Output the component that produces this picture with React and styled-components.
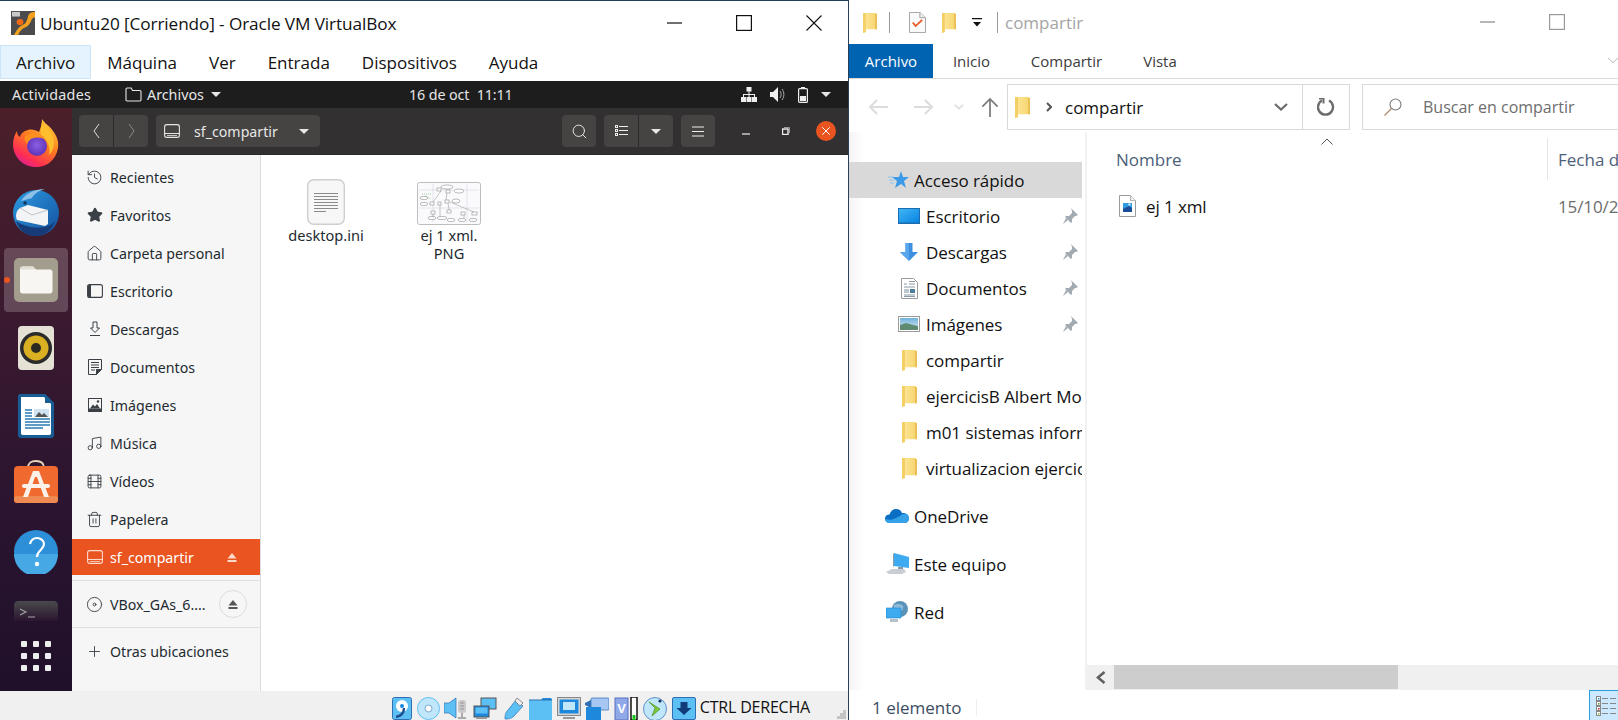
import React from "react";
import styled, { createGlobalStyle } from "styled-components";
import { Disc, Film, History, House, Music, Plus, Search, Star, Trash2 } from "lucide-react";

const GlobalStyle = createGlobalStyle`
  html, body {
    margin: 0;
    padding: 0;
    background: #fff;
    overflow: hidden;
  }
  * { box-sizing: border-box; }
  svg { display: block; flex-shrink: 0; }
`;

const WIN_FONT = `"Open Sans", "Noto Sans", sans-serif`;
const UBU_FONT = `"Noto Sans", "Open Sans", sans-serif`;

const Page = styled.div`
  display: flex;
  width: 1618px;
  height: 720px;
  overflow: hidden;
  font-family: ${WIN_FONT};
`;

/* ---------- VirtualBox window ---------- */

const VBoxWindow = styled.div`
  display: flex;
  flex-direction: column;
  width: 849px;
  height: 720px;
  flex-shrink: 0;
  border-top: 1px solid #1b4057;
  border-right: 1px solid #2a3f55;
  background: #fff;
`;

const VBoxTitle = styled.div`
  display: flex;
  align-items: center;
  height: 44px;
  padding-left: 11px;
  flex-shrink: 0;
`;

const TitleText = styled.span`
  margin-left: 5px;
  font-size: 17.2px;
  letter-spacing: -0.1px;
  color: #111;
`;

const CaptionButtons = styled.div`
  display: flex;
  align-items: center;
  margin-left: auto;
  padding-right: 26px;
  gap: 54px;
`;

const MenuBar = styled.div`
  display: flex;
  height: 36px;
  flex-shrink: 0;
  padding-bottom: 2px;
`;

const MenuItem = styled.div`
  display: flex;
  align-items: center;
  padding: 0 16px;
  font-size: 17px;
  color: #111;
  background: ${(p) => (p.$active ? "#e5f3fe" : "transparent")};
  outline: ${(p) => (p.$active ? "1px solid #cce4f7" : "none")};
  outline-offset: -1px;
`;

const TopPanel = styled.div`
  display: flex;
  align-items: center;
  height: 27px;
  flex-shrink: 0;
  background: #1d1d1d;
  color: #e6e6e6;
  font-family: ${UBU_FONT};
  font-size: 14.3px;
`;

const PanelActivities = styled.span`
  width: 125px;
  padding-left: 12px;
  letter-spacing: 0.25px;
`;

const PanelApp = styled.div`
  display: flex;
  align-items: center;
  width: 284px;
  gap: 5px;
`;

const PanelClock = styled.span`
  width: 332px;
  letter-spacing: -0.1px;
`;

const PanelTray = styled.div`
  display: flex;
  align-items: center;
  gap: 13px;
`;

const Caret = styled.span`
  display: block;
  width: 0;
  height: 0;
  margin-left: ${(p) => p.$ml || 0}px;
  border-left: 5px solid transparent;
  border-right: 5px solid transparent;
  border-top: 5px solid #e6e6e6;
`;

const Desktop = styled.div`
  display: flex;
  flex: 1;
  min-height: 0;
  font-family: ${UBU_FONT};
`;

const Dock = styled.div`
  display: flex;
  flex-direction: column;
  width: 72px;
  flex-shrink: 0;
  background: linear-gradient(180deg, #4c1f2a 0%, #3b1a2f 35%, #2a1430 70%, #20102a 100%);
`;

const DockSlot = styled.div`
  position: relative;
  display: flex;
  justify-content: center;
  align-items: ${(p) => (p.$clip ? "flex-start" : "center")};
  height: ${(p) => p.$h || 68}px;
  padding-top: ${(p) => (p.$clip ? 15 : 0)}px;
  padding-bottom: ${(p) => p.$pb || 0}px;
  overflow: hidden;
  flex-shrink: 0;
`;

const DockActive = styled.div`
  display: flex;
  align-items: center;
  justify-content: center;
  width: 64px;
  height: 64px;
  border-radius: 4px;
  background: rgba(255, 255, 255, 0.2);
`;

const RunningDot = styled.span`
  position: absolute;
  left: 4px;
  top: 31px;
  width: 6px;
  height: 6px;
  border-radius: 50%;
  background: #e95420;
`;

const DockGrid = styled.div`
  display: grid;
  grid-template-columns: repeat(3, 6px);
  gap: 6px;
  margin: auto auto 20px;
`;

const DockDot = styled.span`
  width: 6px;
  height: 6px;
  border-radius: 1px;
  background: #eee;
`;

const FilesWindow = styled.div`
  display: flex;
  flex-direction: column;
  flex: 1;
  min-width: 0;
`;

const HeaderBar = styled.div`
  display: flex;
  align-items: center;
  height: 47px;
  padding-left: 7px;
  flex-shrink: 0;
  background: #323030;
  border-bottom: 1px solid #2a2828;
`;

const HeaderGroup = styled.div`
  display: flex;
  height: 32px;
  margin-right: ${(p) => p.$mr ?? 8}px;
  border-radius: 4px;
  background: #454443;
  overflow: hidden;
`;

const HeaderBtn = styled.div`
  display: flex;
  align-items: center;
  justify-content: center;
  width: ${(p) => p.$w || 34}px;
  & + & {
    border-left: 1px solid #2c2b2b;
  }
`;

const PathBtn = styled.div`
  display: flex;
  align-items: center;
  width: 164px;
  padding-left: 8px;
  color: #e6e6e6;
  font-size: 14.2px;
`;

const PathLabel = styled.span`
  margin-left: 14px;
  width: 105px;
`;

const HeaderSpacer = styled.div`
  width: 234px;
`;

const WmButtons = styled.div`
  display: flex;
  align-items: center;
  margin-left: 27px;
  gap: 32px;
`;

const WmMinimize = styled.span`
  margin-top: 6px;
`;

const WmClose = styled.div`
  display: flex;
  align-items: center;
  justify-content: center;
  width: 20px;
  height: 20px;
  margin-left: -6px;
  border-radius: 50%;
  background: #e95420;
`;

const FilesBody = styled.div`
  display: flex;
  flex: 1;
  min-height: 0;
`;

const Places = styled.div`
  display: flex;
  flex-direction: column;
  width: 189px;
  flex-shrink: 0;
  padding-top: 10px;
  background: #f6f6f6;
  border-right: 1px solid #dcdcdc;
  color: #1e2a30;
  font-size: 14.2px;
`;

const PlacesList = styled.div`
  display: flex;
  flex-direction: column;
  gap: 14px;
`;

const PlaceRow = styled.div`
  display: flex;
  align-items: center;
  height: ${(p) => (p.$selected ? 36 : p.$h || 24)}px;
  margin-top: ${(p) => (p.$selected ? -6 : 0)}px;
  padding-left: 14px;
  gap: 7px;
  background: ${(p) => (p.$selected ? "#e95420" : "transparent")};
  color: ${(p) => (p.$selected ? "#fff" : "inherit")};
`;

const PlaceIcon = styled.span`
  display: flex;
  align-items: center;
  justify-content: center;
  width: 17px;
  flex-shrink: 0;
`;

const PlaceLabel = styled.span`
  flex: 1;
  white-space: nowrap;
`;

const PlaceRule = styled.div`
  height: 1px;
  margin-top: ${(p) => p.$mt || 0}px;
  background: #dfdfdf;
`;

const EjectCell = styled.span`
  margin-right: 23px;
`;

const EjectRound = styled.div`
  display: flex;
  align-items: center;
  justify-content: center;
  width: 28px;
  height: 28px;
  margin-right: 13px;
  border: 1px solid #dcdcdc;
  border-radius: 50%;
`;

const FileGrid = styled.div`
  display: flex;
  flex: 1;
  align-items: flex-start;
  padding: 23px 0 0 15px;
  gap: 23px;
  background: #fff;
`;

const FileItem = styled.div`
  display: flex;
  flex-direction: column;
  align-items: center;
  width: 100px;
  color: #1e2a30;
  font-size: 14.6px;
  line-height: 18px;
  text-align: center;
`;

const FileThumb = styled.div`
  display: flex;
  align-items: flex-end;
  height: 47px;
  margin-bottom: 1px;
`;

const VBoxStatus = styled.div`
  display: flex;
  align-items: center;
  justify-content: flex-end;
  height: 29px;
  flex-shrink: 0;
  padding: 6px 2px 0 0;
  background: #f0f0f0;
  overflow: hidden;
`;

const StatusIcons = styled.div`
  display: flex;
  align-items: flex-start;
  height: 23px;
  gap: 4.8px;
`;

const HostKey = styled.span`
  margin: -3px 27px 0 4px;
  font-size: 16px;
  letter-spacing: -0.2px;
  color: #111;
`;

const GripCell = styled.span`
  align-self: flex-end;
  margin-bottom: 1px;
`;

/* ---------- Explorer window ---------- */

const Explorer = styled.div`
  display: flex;
  flex-direction: column;
  flex: 1;
  min-width: 0;
  background: #fff;
  font-family: ${WIN_FONT};
`;

const QuickBar = styled.div`
  display: flex;
  align-items: center;
  height: 44px;
  padding-left: 14px;
  flex-shrink: 0;
`;

const QuickRule = styled.span`
  width: 1px;
  height: 21px;
  margin: 0 ${(p) => p.$mr}px 0 ${(p) => p.$ml}px;
  background: #9a9a9a;
`;

const QuickGap = styled.span`
  width: ${(p) => p.$w}px;
`;

const QuickTitle = styled.span`
  font-size: 17px;
  color: #a4a4a4;
`;

const QuickCaptions = styled.div`
  display: flex;
  align-items: center;
  margin-left: auto;
  padding-right: 53px;
  gap: 54px;
`;

const Tabs = styled.div`
  display: flex;
  align-items: stretch;
  height: 35px;
  flex-shrink: 0;
  border-bottom: 1.5px solid #dadada;
`;

const Tab = styled.div`
  display: flex;
  align-items: center;
  justify-content: center;
  width: ${(p) => p.$w}px;
  font-size: 15px;
  color: ${(p) => (p.$active ? "#fff" : "#3b3b3b")};
  background: ${(p) => (p.$active ? "#0063b1" : "transparent")};
`;

const TabsEnd = styled.div`
  display: flex;
  align-items: center;
  margin-left: auto;
  margin-right: -1px;
`;

const NavBar = styled.div`
  display: flex;
  align-items: center;
  height: 53px;
  padding: 5px 0 2px 6px;
  flex-shrink: 0;
`;

const NavSlot = styled.div`
  display: flex;
  justify-content: center;
  width: ${(p) => p.$w}px;
  flex-shrink: 0;
`;

const AddressBox = styled.div`
  display: flex;
  align-items: center;
  width: 343px;
  height: 46px;
  padding-left: 7px;
  border: 1px solid #d9d9d9;
  flex-shrink: 0;
  font-size: 17px;
  color: #111;
`;

const AddressSep = styled.span`
  margin-left: 16px;
`;

const AddressLabel = styled.span`
  margin-left: 13px;
  flex: 1;
`;

const RefreshCell = styled.div`
  display: flex;
  align-items: center;
  justify-content: center;
  width: 47px;
  height: 100%;
  margin-left: 14px;
  border-left: 1px solid #d9d9d9;
`;

const SearchBox = styled.div`
  display: flex;
  align-items: center;
  width: 300px;
  height: 46px;
  margin-left: 12px;
  padding-left: 21px;
  gap: 21px;
  border: 1px solid #d9d9d9;
  flex-shrink: 0;
  font-size: 16px;
  color: #6d6d6d;
  white-space: nowrap;
`;

const ExplorerBody = styled.div`
  display: flex;
  flex: 1;
  min-height: 0;
`;

const NavPane = styled.div`
  display: flex;
  flex-direction: column;
  width: 238px;
  flex-shrink: 0;
  padding: 30px 3px 0 0;
  border-right: 2px solid #f1f1f1;
  font-size: 17px;
  letter-spacing: -0.05px;
  color: #111;
  background: linear-gradient(90deg, #f3f3f3 0, #fff 14px);
  overflow: hidden;
`;

const QuickRow = styled.div`
  display: flex;
  align-items: center;
  height: 36px;
  flex-shrink: 0;
  padding-left: ${(p) => p.$indent}px;
  margin-top: ${(p) => (p.$gap ? 12 : 0)}px;
  gap: ${(p) => (p.$sub ? 6 : 5)}px;
  background: ${(p) => (p.$selected ? "#d9d9d9" : "transparent")};
  white-space: nowrap;
  overflow: hidden;
`;

const QuickLabel = styled.span`
  flex: 1;
  min-width: 0;
  overflow: hidden;
`;

const NavIconBox = styled.span`
  display: flex;
  align-items: center;
  justify-content: center;
  width: ${(p) => p.$w || 22}px;
  flex-shrink: 0;
`;

const PinCell = styled.span`
  margin: 0 4px 0 6px;
`;

const FileArea = styled.div`
  display: flex;
  flex-direction: column;
  flex: 1;
  min-width: 0;
`;

const ColumnHeads = styled.div`
  position: relative;
  display: flex;
  height: 48px;
  padding: 6px 0 0 29px;
  flex-shrink: 0;
  font-size: 17px;
  color: #4c607a;
`;

const SortMark = styled.span`
  position: absolute;
  left: 234px;
  top: 6px;
`;

const ColumnName = styled.div`
  display: flex;
  align-items: center;
  width: 432px;
  flex-shrink: 0;
  border-right: 1px solid #e5e5e5;
`;

const ColumnDate = styled.div`
  display: flex;
  align-items: center;
  padding-left: 10px;
  white-space: nowrap;
`;

const FileList = styled.div`
  flex: 1;
  min-height: 0;
`;

const FileRow = styled.div`
  display: flex;
  align-items: center;
  height: 36px;
  margin-top: 8px;
  padding-left: 32px;
  font-size: 17px;
  letter-spacing: -0.1px;
  color: #111;
`;

const FileRowName = styled.span`
  width: 412px;
  flex-shrink: 0;
  margin-left: 10px;
`;

const FileRowDate = styled.span`
  color: #6d6d6d;
  white-space: nowrap;
`;

const ScrollTrack = styled.div`
  display: flex;
  height: 25px;
  flex-shrink: 0;
  background: #f0f0f0;
`;

const ScrollArrow = styled.div`
  display: flex;
  align-items: center;
  justify-content: center;
  width: 27px;
`;

const ScrollThumb = styled.div`
  width: 284px;
  height: 24px;
  background: #cdcdcd;
`;

const ExplorerStatus = styled.div`
  display: flex;
  align-items: flex-end;
  height: 30px;
  flex-shrink: 0;
  padding-left: 23px;
  font-size: 17px;
  color: #3c4d5f;
`;

const StatusCount = styled.span`
  width: 105px;
  height: 17px;
  margin-bottom: 4px;
  line-height: 17px;
  border-right: 1px solid #eee;
`;

const ViewToggle = styled.div`
  display: flex;
  align-items: center;
  width: 29px;
  height: 100%;
  margin-left: auto;
  padding-left: 6px;
  background: #cce8ff;
  border: 1px solid #26a0da;
  border-right: none;
  border-bottom: none;
`;

/* ---------- drawings ---------- */

const Line = ({ w = 16, color = "#111" }) => (
  <svg width={w} height="2" viewBox={`0 0 ${w} 2`}>
    <path d={`M0 1h${w}`} stroke={color} strokeWidth="1.2" />
  </svg>
);

const Square = ({ color = "#111" }) => (
  <svg width="16" height="16" viewBox="0 0 16 16">
    <rect x=".6" y=".6" width="14.8" height="14.8" fill="none" stroke={color} strokeWidth="1.2" />
  </svg>
);

const Cross = ({ size = 16, color = "#111", sw = 1.1 }) => (
  <svg width={size} height={size} viewBox="0 0 16 16">
    <path d="M.5.5l15 15M15.5.5l-15 15" stroke={color} strokeWidth={sw} fill="none" />
  </svg>
);

const VBoxLogo = () => (
  <svg width="24" height="24" viewBox="0 0 24 26" preserveAspectRatio="none">
    <rect width="24" height="26" fill="#4b4b4d" />
    <rect x="1" y="1" width="8" height="5" fill="#c9c9c9" />
    <path d="M3 26c3-6 6-10 9-11s4-5 5-9 3-5 7-5v6c-3 0-3 2-4 4s-3 6-6 7-5 4-7 8z" fill="#f3a11f" />
    <circle cx="9" cy="12" r="3.4" fill="#ef6a17" />
  </svg>
);

const FolderOutline = () => (
  <svg width="17" height="15" viewBox="0 0 17 15" fill="none" stroke="#e6e6e6" strokeWidth="1.1">
    <path d="M1 3.5V2.2C1 1.5 1.5 1 2.2 1h4l1.3 2.5h7.3c.7 0 1.2.5 1.2 1.2v8.1c0 .7-.5 1.2-1.2 1.2H2.2c-.7 0-1.2-.5-1.2-1.2z" />
  </svg>
);

const TrayNetwork = () => (
  <svg width="16" height="15" viewBox="0 0 16 15" fill="#eee">
    <rect x="5.5" y="0" width="5" height="4.5" />
    <rect x="0" y="10" width="5" height="5" />
    <rect x="5.5" y="10" width="5" height="5" />
    <rect x="11" y="10" width="5" height="5" />
    <path d="M7.5 4h1v3h5.5v3h-1V8H8.5v2h-1V8H3v2H2V7h5.5z" />
  </svg>
);

const TraySpeaker = () => (
  <svg width="15" height="15" viewBox="0 0 15 15">
    <path d="M0 5h3l5-5v15l-5-5H0z" fill="#eee" />
    <path d="M10 4c1.5 2 1.5 5 0 7M12 2c2.5 3 2.5 8 0 11" fill="none" stroke="#aaa" strokeWidth="1" />
  </svg>
);

const TrayBattery = () => (
  <svg width="10" height="16" viewBox="0 0 10 16">
    <rect x=".6" y="1.6" width="8.8" height="13.8" rx="1" fill="none" stroke="#eee" strokeWidth="1.2" />
    <rect x="3" y="0" width="4" height="2" fill="#eee" />
    <rect x="2" y="9" width="6" height="5" fill="#eee" />
  </svg>
);

const NavChevron = ({ dir = "left", color = "#ddd" }) => (
  <svg width="7" height="16" viewBox="0 0 7 16" fill="none" stroke={color} strokeWidth="1">
    <path d={dir === "left" ? "M6 1L1 8l5 7" : "M1 1l5 7-5 7"} />
  </svg>
);

const DriveIcon = ({ color = "#e6e6e6", size = 16 }) => (
  <svg width={size} height={size} viewBox="0 0 16 16" fill="none" stroke={color} strokeWidth="1.1">
    <rect x=".6" y="1.6" width="14.8" height="12.8" rx="2.2" />
    <path d="M.6 10.5h14.8" />
    <path d="M3 12.5h10" strokeWidth=".8" />
  </svg>
);

const ListViewIcon = () => (
  <svg width="13" height="12" viewBox="0 0 13 12" fill="none" stroke="#eee" strokeWidth="1">
    <rect x=".5" y=".5" width="2" height="2" />
    <rect x=".5" y="4.5" width="2" height="2" />
    <rect x=".5" y="8.5" width="2" height="2" />
    <path d="M4 1.5h9M4 5.5h9M4 9.5h9" />
  </svg>
);

const HamburgerIcon = () => (
  <svg width="12" height="11" viewBox="0 0 12 11" stroke="#eee" strokeWidth="1">
    <path d="M0 1h12M0 5.5h12M0 10h12" />
  </svg>
);

const RestoreIcon = () => (
  <svg width="8" height="8" viewBox="0 0 8 8" fill="none" stroke="#eee" strokeWidth="1">
    <rect x=".5" y="2" width="5.5" height="5.5" strokeWidth="1.4" />
    <path d="M2 .5h5.5V6" stroke="#999" />
  </svg>
);

const EjectIcon = ({ color = "#3a4046" }) => (
  <svg width="10" height="9" viewBox="0 0 10 9" fill={color}>
    <path d="M5 0l4.5 5.5h-9zM.5 7h9v2h-9z" />
  </svg>
);

const DesktopPlace = () => (
  <svg width="16" height="14" viewBox="0 0 16 14">
    <rect x=".6" y=".6" width="14.8" height="12.8" rx="2" fill="none" stroke="#3a4046" strokeWidth="1.1" />
    <path d="M1 2.5C1 1.5 1.5 1 2.5 1H4v12H2.500C1.500 13 1 12.5 1 11.5z" fill="#3a4046" />
  </svg>
);

const DownloadPlace = () => (
  <svg width="16" height="16" viewBox="0 0 16 16" fill="none" stroke="#3a4046" strokeWidth="1">
    <path d="M6 1h4v6h2.5L8 11.5 3.5 7H6z" />
    <path d="M3 14.5h10" />
  </svg>
);

const DocumentPlace = () => (
  <svg width="14" height="16" viewBox="0 0 14 16" fill="none" stroke="#3a4046" strokeWidth="1">
    <path d="M.5.5h13v10l-5 5h-8z" />
    <path d="M3 3.500h8M3 6h8M3 8.500h8M3 11h4" />
    <path d="M13.5 10.5h-5v5z" fill="#3a4046" />
  </svg>
);

const ImagePlace = () => (
  <svg width="14" height="14" viewBox="0 0 14 14">
    <rect width="14" height="14" fill="#3a4046" />
    <rect x="1" y="1" width="12" height="9.5" fill="#f6f6f6" />
    <path d="M2 10.5l3-4 2 2 2-2.5 3 4.500z" fill="#3a4046" />
    <circle cx="10" cy="3.5" r="1.2" fill="#3a4046" />
  </svg>
);

const IconStroke = { size: 17, color: "#3a4046", strokeWidth: 1.3 };

const DocThumb = () => (
  <svg width="38" height="46" viewBox="0 0 38 46">
    <rect x=".7" y=".7" width="36.6" height="44.6" rx="6" fill="#f7f7f7" stroke="#cfcfcf" strokeWidth="1.4" />
    <path d="M7 14.5h24M7 17.5h24M7 20.5h24M7 23.5h24M7 26.5h24M7 29.5h24M7 32.5h12" stroke="#8a8a8a" strokeWidth="1" />
  </svg>
);

const DiagramThumb = () => (
  <svg width="64" height="43" viewBox="0 0 64 43">
    <rect x=".5" y=".5" width="63" height="42" rx="2" fill="#fafafc" stroke="#bdbdbd" />
    <path d="M2 8h60M2 26h60M16 2v38M50 2v38" stroke="#d9d9ea" strokeWidth=".7" />
    <g fill="#fff" stroke="#8f8f8f" strokeWidth=".6">
      <ellipse cx="30" cy="5" rx="6" ry="2" />
      <rect x="20" y="6" width="4" height="3" />
      <rect x="29" y="8" width="4" height="3" />
      <ellipse cx="42" cy="9" rx="5" ry="2" />
      <rect x="28" y="18" width="4" height="3" />
      <ellipse cx="39" cy="19" rx="4" ry="2" />
      <ellipse cx="7" cy="16" rx="4" ry="1.6" />
      <ellipse cx="7" cy="22" rx="4" ry="1.6" />
      <rect x="13" y="20" width="4" height="3" />
      <rect x="21" y="20" width="3" height="3" />
      <rect x="14" y="29" width="4" height="3" />
      <rect x="30" y="28" width="4" height="3" />
      <rect x="44" y="30" width="4" height="3" />
      <rect x="55" y="30" width="5" height="3" />
      <ellipse cx="15" cy="36" rx="4" ry="1.6" />
      <ellipse cx="25" cy="36" rx="5" ry="1.6" />
      <ellipse cx="34" cy="38" rx="4" ry="1.6" />
      <ellipse cx="45" cy="38" rx="4" ry="1.6" />
      <ellipse cx="56" cy="38" rx="4" ry="1.6" />
    </g>
    <path d="M24 9l-8 11M30 11l-1 7M31 21l1 7M23 23v12M16 32v3M47 33v3M33 20l24 10" stroke="#8f8f8f" strokeWidth=".5" />
    <path d="M5 12h10M8 14l6 3" stroke="#5cb85c" strokeWidth=".6" strokeDasharray="1 1" />
  </svg>
);

const FirefoxIcon = () => (
  <svg width="46" height="48" viewBox="0 0 46 48">
    <defs>
      <linearGradient id="ffBody" x1="0.8" y1="0" x2="0.2" y2="1">
        <stop offset="0" stopColor="#ffd23c" />
        <stop offset=".45" stopColor="#ff7a1f" />
        <stop offset=".8" stopColor="#ff2d55" />
        <stop offset="1" stopColor="#d41fa0" />
      </linearGradient>
      <radialGradient id="ffGlobe" cx=".5" cy=".45" r=".6">
        <stop offset="0" stopColor="#8a5fe0" />
        <stop offset="1" stopColor="#5b2fb5" />
      </radialGradient>
    </defs>
    <path d="M29 0c3 5 8 7 11 12 4 5 6 11 5 17-2 12-11 19-22 19C10 48 0 38 0 25c0-5 2-10 4-13 0 3 1 5 3 6 1-4 4-6 8-7 3-1 8 0 11 2 2-5 3-9 3-13z" fill="url(#ffBody)" />
    <path d="M29 4c6 5 12 11 12 20 0 5-2 9-5 12 2-8-2-16-8-20-1-3 0-8 1-12z" fill="#ffbe2e" />
    <circle cx="24" cy="27" r="10" fill="url(#ffGlobe)" />
    <path d="M12 17c4-3 9-3 14-2 3 1 5 3 6 5-5-2-10-2-14 0-2 1-3 3-4 5-2-2-3-5-2-8z" fill="#ff8f1f" />
  </svg>
);

const ThunderbirdIcon = () => (
  <svg width="48" height="48" viewBox="0 0 48 48">
    <defs>
      <linearGradient id="tbBody" x1="0" y1="0" x2="1" y2="1">
        <stop offset="0" stopColor="#2b9be0" />
        <stop offset="1" stopColor="#14509e" />
      </linearGradient>
    </defs>
    <circle cx="24" cy="25" r="23" fill="url(#tbBody)" />
    <path d="M9 13c4-7 12-12 24-12-7 2-11 5-13 9z" fill="#8fc0e8" />
    <path d="M8 20l8-3 20 5 0 14-3 2L5 32c-2-4-1-9 3-12z" fill="#f3f4f6" />
    <path d="M8 20l12 7 16-5" fill="none" stroke="#bfc4cb" strokeWidth="1" />
    <path d="M4 33c7 5 18 8 29 6 4-1 8-3 10-6-3 9-10 15-19 15C14 48 7 42 4 33z" fill="#173a78" />
    <circle cx="13" cy="15" r="1.800" fill="#13365f" />
  </svg>
);

const FilesIcon = () => (
  <svg width="44" height="44" viewBox="0 0 44 44">
    <rect width="44" height="44" rx="5" fill="#a39d8d" />
    <path d="M6 11c0-1.5 1-2.5 2.5-2.5H19l3 3h14c1.5 0 2.5 1 2.500 2.500v19c0 1.500-1 2.500-2.500 2.500H8.500C7 35.500 6 34.500 6 33z" fill="#f8f6f2" />
    <path d="M6 11c0-1.5 1-2.5 2.5-2.5H19l3 3H6z" fill="#e2ded5" />
  </svg>
);

const RhythmboxIcon = () => (
  <svg width="36" height="44" viewBox="0 0 36 44">
    <rect width="36" height="44" rx="4" fill="#e5e1d5" />
    <circle cx="18" cy="22" r="16" fill="#2b2b2b" />
    <circle cx="18" cy="22" r="12.5" fill="#d8b021" />
    <circle cx="18" cy="22" r="5" fill="#2a2a22" />
  </svg>
);

const WriterIcon = () => (
  <svg width="36" height="44" viewBox="0 0 36 44">
    <path d="M2 0h25l9 9v32c0 1.7-1.3 3-3 3H3c-1.7 0-3-1.3-3-3V2C0 1 1 0 2 0z" fill="#185d93" />
    <path d="M3 3h23l7 7v29c0 1-.5 2-2 2H5c-1.5 0-2-1-2-2z" fill="#fff" />
    <path d="M27 0l9 9h-9z" fill="#185d93" />
    <path d="M7 16h7M7 19h7M7 22h7M7 25h25M7 28h25M7 31h25M7 34h18" stroke="#2a7bb4" strokeWidth="1.6" />
    <rect x="16" y="15" width="15" height="8" fill="#cfe3f2" />
    <path d="M17 23l4-5 3 3 2-2 4 4z" fill="#555" />
  </svg>
);

const StoreIcon = () => (
  <svg width="44" height="44" viewBox="0 0 44 44">
    <path d="M14 8c0-5 3-7 8-7s8 2 8 7" fill="none" stroke="#e8d4b8" strokeWidth="1.8" />
    <rect y="6" width="44" height="37" rx="4" fill="#f0692e" />
    <rect y="36" width="44" height="7" rx="3" fill="#ef8a52" />
    <path d="M19 11h6l10 26h-5l-7-20h-2l-7 20H9z" fill="#fbf1e8" />
    <rect x="8" y="24" width="28" height="4" rx="2" fill="#fbf1e8" />
  </svg>
);

const HelpIcon = () => (
  <svg width="44" height="44" viewBox="0 0 44 44">
    <circle cx="22" cy="22" r="22" fill="#2c8fd8" />
    <path d="M0 24h44a22 22 0 0 1-44 0z" fill="#46a8e4" />
    <path d="M16 14c1-4 4-6 7-6 4 0 7 3 7 6 0 6-7 6-7 13" fill="none" stroke="#fff" strokeWidth="2.2" />
    <circle cx="23" cy="34" r="2.2" fill="#fff" />
  </svg>
);

const TerminalIcon = () => (
  <svg width="44" height="20" viewBox="0 0 44 20">
    <defs>
      <linearGradient id="termFade" x1="0" y1="0" x2="0" y2="1">
        <stop offset="0" stopColor="#4a4a4c" />
        <stop offset="1" stopColor="#2a1430" />
      </linearGradient>
    </defs>
    <path d="M0 4c0-2 2-4 4-4h36c2 0 4 2 4 4v16H0z" fill="url(#termFade)" />
    <path d="M6 8l6 3-6 3M14 16h7" fill="none" stroke="#a3a3a3" strokeWidth="1.1" />
  </svg>
);

const WinFolder = ({ w = 15, h = 22 }) => (
  <svg width={w} height={h} viewBox="0 0 15 23" preserveAspectRatio="none">
    <defs>
      <linearGradient id="wfBody" x1="0" y1="0" x2="1" y2="0">
        <stop offset="0" stopColor="#fde79c" />
        <stop offset="1" stopColor="#f7d66f" />
      </linearGradient>
    </defs>
    <path d="M0 1h14v18H3v3l-3 1z" fill="url(#wfBody)" />
    <path d="M0 1h3v21l-3 1z" fill="#f4cf66" />
    <path d="M13 2h2v17h-2z" fill="#ebbf55" />
  </svg>
);

const ChecklistDoc = () => (
  <svg width="17" height="21" viewBox="0 0 18 24" preserveAspectRatio="none">
    <path d="M.5.5h11l6 6v17H.5z" fill="#fafafa" stroke="#9c9c9c" />
    <path d="M11.500.5v6h6" fill="#eee" stroke="#9c9c9c" />
    <path d="M4 12l3 4 7-7" fill="none" stroke="#e9541f" strokeWidth="1.8" />
  </svg>
);

const QuickDrop = () => (
  <svg width="10" height="10" viewBox="0 0 10 10">
    <path d="M0 1h10v1.2H0zM1 5h8L5 9.5z" fill="#111" />
  </svg>
);

const ChevronDown = ({ w = 14, color = "#6a6a6a", sw = 2.2 }) => (
  <svg width={w} height={w * 0.6} viewBox="0 0 14 8.4" fill="none" stroke={color} strokeWidth={sw}>
    <path d="M1 1l6 5.5L13 1" />
  </svg>
);

const ThinArrow = ({ dir = "left", color = "#dcdcdc" }) => (
  <svg width="20" height="16" viewBox="0 0 20 16" fill="none" stroke={color} strokeWidth="2">
    <path d={dir === "left" ? "M20 8H2M9 1L2 8l7 7" : "M0 8h18M11 1l7 7-7 7"} />
  </svg>
);

const UpArrow = () => (
  <svg width="20" height="20" viewBox="0 0 20 21" fill="none" stroke="#7a7a7a" strokeWidth="1.8">
    <path d="M10 21V2M2 10l8-8 8 8" />
  </svg>
);

const AddressChevron = () => (
  <svg width="6" height="10" viewBox="0 0 6 10" fill="none" stroke="#555" strokeWidth="2">
    <path d="M1 1l4 4-4 4" />
  </svg>
);

const RefreshIcon = () => (
  <svg width="18" height="18" viewBox="0 0 18 18" fill="none" stroke="#6d6d6d" strokeWidth="2.4">
    <path d="M5 2.5a7.5 7.5 0 1 0 7 0" />
    <path d="M2 .5h4.5v5" strokeWidth="2" />
  </svg>
);

const SearchGlass = () => (
  <svg width="18" height="18" viewBox="0 0 18 18" fill="none" stroke="#7a7a7a" strokeWidth="1.1">
    <circle cx="11.5" cy="6.5" r="5.5" />
    <path d="M7.5 10.5L.5 17.5" stroke="#b08a6a" strokeWidth="1.3" />
  </svg>
);

const SortCaret = () => (
  <svg width="12" height="7" viewBox="0 0 12 7" fill="none" stroke="#555" strokeWidth="1">
    <path d="M.5 6.5L6 1l5.500 5.500" />
  </svg>
);

const SpeedStar = () => (
  <svg width="21" height="18" viewBox="0 0 21 18">
    <path d="M13 0l2 6h6l-5 4 2 7-5-4-6 4 2-7-5-4h7z" fill="#3b9be8" />
    <path d="M0 6h5M1 9h5M2 12h4" stroke="#8fc4ef" strokeWidth="1" />
  </svg>
);

const DesktopWin = () => (
  <svg width="22" height="16" viewBox="0 0 22 16">
    <defs>
      <linearGradient id="dwBody" x1="0" y1="0" x2="1" y2="1">
        <stop offset="0" stopColor="#3fb4f5" />
        <stop offset="1" stopColor="#0a84e2" />
      </linearGradient>
    </defs>
    <rect width="22" height="16" fill="#1c6db0" />
    <rect x="1" y="1" width="20" height="13.5" fill="url(#dwBody)" />
  </svg>
);

const DownloadWin = () => (
  <svg width="18" height="18" viewBox="0 0 18 18">
    <path d="M5.5 0h7v9H18l-9 9-9-9h5.5z" fill="#3d8fdf" />
    <path d="M5.5 0H9v17.500L0 9h5.500z" fill="#59a6ee" />
  </svg>
);

const DocumentWin = () => (
  <svg width="17" height="21" viewBox="0 0 17 21">
    <path d="M.5.5h12l4 4v16H.5z" fill="#fff" stroke="#9a9a9a" />
    <path d="M3 6h3M8 3.5h6M8 6h6M3 9h11M3 17h11M3 18.5h11" stroke="#8a9aa8" strokeWidth="1" />
    <rect x="3" y="11" width="5" height="4" fill="#bcc7d0" />
    <rect x="9" y="11" width="5" height="4" fill="#4d7d99" />
  </svg>
);

const ImageWin = () => (
  <svg width="22" height="16" viewBox="0 0 22 16">
    <defs>
      <linearGradient id="iwSky" x1="0" y1="0" x2="0" y2="1">
        <stop offset="0" stopColor="#6fb2dc" />
        <stop offset="1" stopColor="#dfeaf2" />
      </linearGradient>
    </defs>
    <rect x=".5" y=".5" width="21" height="15" fill="#fff" stroke="#9a9a9a" />
    <rect x="2" y="2" width="18" height="12" fill="url(#iwSky)" />
    <path d="M2 9l6-2 7 2 5 1v4H2z" fill="#5f8a72" />
  </svg>
);

const PinIcon = () => (
  <svg width="16" height="16" viewBox="0 0 16 16" fill="#a3abb2">
    <path d="M9 0l7 7-2 1h-1l-3 3v3l-1 1-6-6 1-1h3l3-3V3z" />
    <path d="M4 10l2 2-5 4z" />
  </svg>
);

const OneDriveIcon = () => (
  <svg width="24" height="16" viewBox="0 0 24 16">
    <path d="M5 15c-3 0-5-2-5-4.5S2 6.5 4.5 6.5C5.5 3 8 1 11 1c3 0 5 1.5 6 4 3-.5 7 1.5 7 5 0 3-2 5-5 5z" fill="#0a6fc4" />
    <path d="M0 11c0 2.5 2 4 5 4h14c3 0 5-2 5-5 0-2-1-3-3-4-2-.5-4 0-6 2L9 11c-2 1-6 1-9 0z" fill="#35a2e8" />
  </svg>
);

const PcIcon = () => (
  <svg width="23" height="22" viewBox="0 0 23 22">
    <path d="M8 0l15 4v11L8 13z" fill="#3eaaf0" />
    <path d="M8 0v13l-1 1V1z" fill="#8a9aa8" />
    <path d="M0 19l6-3h12l2 3-4 2H3z" fill="#c8ced4" />
    <path d="M12 14h5v2h-5z" fill="#8a9aa8" />
  </svg>
);

const NetworkIcon = () => (
  <svg width="22" height="22" viewBox="0 0 22 22">
    <circle cx="14" cy="8" r="8" fill="#5b93b8" />
    <path d="M8 4c3-2 8-1 9 1s-1 6-4 6-6-3-5-7z" fill="#8fbcd8" />
    <rect x="0" y="7" width="15" height="10" fill="#3eaaf0" stroke="#2a86ca" strokeWidth=".6" />
    <path d="M4 18h8v3H4z" fill="#b9c1c8" />
  </svg>
);

const ImageFileIcon = () => (
  <svg width="17" height="22" viewBox="0 0 17 22">
    <path d="M.5.5h11l5 5v16H.5z" fill="#fff" stroke="#9a9a9a" />
    <path d="M11.5.5v5h5" fill="#f1f1f1" stroke="#b5b5b5" />
    <rect x="4" y="8" width="9" height="9" fill="#1c4d9a" />
    <path d="M4 8h9v5l-3-2-6 3z" fill="#2f9be0" />
    <rect x="9.5" y="8.5" width="2" height="2" fill="#dff1fb" />
  </svg>
);

const TinyList = () => (
  <svg width="24" height="20" viewBox="0 0 24 20">
    <g fill="#fff" stroke="#888" strokeWidth="1">
      <rect x=".5" y=".5" width="4" height="4" />
      <rect x=".5" y="5.5" width="4" height="4" />
      <rect x=".5" y="10.5" width="4" height="4" />
      <rect x=".5" y="15.5" width="4" height="4" />
    </g>
    <path d="M6 2.5h6M14 2.5h6M6 7.5h6M14 7.5h6M6 12.5h6M14 12.5h6M6 17.5h6M14 17.5h6" stroke="#888" strokeWidth="1.2" />
    <rect x="2" y="2" width="1.5" height="1.5" fill="#2f9be0" />
    <rect x="2" y="7" width="1.5" height="1.5" fill="#5a8f3a" />
    <rect x="2" y="12" width="1.5" height="1.5" fill="#d02020" />
    <rect x="2" y="17" width="1.5" height="1.5" fill="#8fb838" />
  </svg>
);

const SmallLeft = () => (
  <svg width="10" height="13" viewBox="0 0 10 13" fill="none" stroke="#606060" strokeWidth="2.6">
    <path d="M8.5 1L2 6.5 8.5 12" />
  </svg>
);

const ResizeGrip = () => (
  <svg width="9" height="9" viewBox="0 0 9 9" fill="#c4c4c4">
    <rect x="6" y="0" width="3" height="3" />
    <rect x="3" y="3" width="3" height="3" />
    <rect x="6" y="3" width="3" height="3" />
    <rect x="0" y="6" width="3" height="3" />
    <rect x="3" y="6" width="3" height="3" />
    <rect x="6" y="6" width="3" height="3" />
  </svg>
);

/* VirtualBox status bar indicators */
const SB = { blue: "#5cc0f5", deep: "#1e88dc", pale: "#bfe6fb", edge: "#2f6fb5" };

const SbDisk = () => (
  <svg width="20" height="23" viewBox="0 0 20 23">
    <rect x=".5" y=".5" width="19" height="22" rx="2" fill={SB.blue} stroke={SB.edge} />
    <circle cx="10" cy="9" r="6" fill="#fff" />
    <circle cx="10" cy="9" r="2" fill={SB.deep} />
    <path d="M12 11c0 5-3 8-8 9" stroke="#1d4f8f" strokeWidth="2.4" fill="none" />
  </svg>
);

const SbCd = () => (
  <svg width="23" height="23" viewBox="0 0 23 23">
    <circle cx="11.5" cy="11.5" r="11" fill={SB.pale} stroke={SB.blue} />
    <circle cx="11.5" cy="11.5" r="3.5" fill="#fff" stroke="#7aa7cf" />
  </svg>
);

const SbAudio = () => (
  <svg width="24" height="23" viewBox="0 0 24 23">
    <path d="M0 6h5l7-5v20l-7-5H0z" fill={SB.blue} stroke={SB.edge} strokeWidth=".7" />
    <rect x="14" y="3" width="8" height="13" rx="3" fill="#c9c9c9" />
    <path d="M16 6h4M16 9h4M16 12h4" stroke="#999" />
    <path d="M18 16v4M14 21h8" stroke="#aaa" strokeWidth="2" />
  </svg>
);

const SbNet = () => (
  <svg width="24" height="23" viewBox="0 0 24 23">
    <rect x="8" y="1" width="15" height="11" fill={SB.blue} stroke="#555" />
    <rect x="1" y="9" width="15" height="11" fill={SB.deep} stroke="#555" />
    <rect x="2.5" y="10.5" width="12" height="6" fill={SB.blue} />
    <path d="M3 21h11" stroke="#999" strokeWidth="2" />
  </svg>
);

const SbUsb = () => (
  <svg width="22" height="23" viewBox="0 0 22 23">
    <path d="M14 3l7 6-9 10c-3 3-6 3-9 3 0-3 0-6 3-9z" fill={SB.blue} stroke={SB.edge} strokeWidth=".7" />
    <path d="M15 1l6 5-3 3-5-5z" fill="#eee" stroke="#666" strokeWidth=".7" />
  </svg>
);

const SbFolder = () => (
  <svg width="23" height="23" viewBox="0 0 23 23">
    <path d="M0 3h12l2-2h8l1 2v20H0z" fill={SB.blue} />
    <path d="M12 3l2-2h8l1 2z" fill={SB.deep} />
    <path d="M0 3h23" stroke={SB.edge} />
  </svg>
);

const SbDisplay = () => (
  <svg width="24" height="23" viewBox="0 0 24 23">
    <rect x=".5" y=".5" width="23" height="18" fill="#d6d6d6" stroke="#888" />
    <rect x="2.5" y="2.5" width="19" height="14" fill={SB.deep} />
    <rect x="6" y="5" width="12" height="8" fill={SB.pale} />
    <path d="M6 21h12" stroke="#999" strokeWidth="2" />
  </svg>
);

const SbCamera = () => (
  <svg width="24" height="23" viewBox="0 0 24 23">
    <rect x="6" y="1" width="18" height="12" rx="1" fill="#a7c7f2" stroke={SB.edge} strokeWidth=".7" />
    <path d="M0 6l6-3v8l-6-3z" fill={SB.edge} />
    <rect x="1" y="10" width="15" height="13" fill={SB.deep} />
  </svg>
);

const SbChip = () => (
  <svg width="24" height="23" viewBox="0 0 24 23">
    <rect x="1" y="1" width="13" height="22" fill="#8fa8e8" stroke="#5a6fc0" />
    <text x="7.5" y="16" textAnchor="middle" fontSize="13" fontWeight="700" fontFamily="Liberation Sans" fill="#fff">V</text>
    <rect x="17" y="0" width="6" height="23" fill="#fff" stroke="#000" strokeWidth="1.4" />
    <rect x="18.5" y="18" width="3" height="5" fill="#16c416" />
  </svg>
);

const SbSeamless = () => (
  <svg width="24" height="23" viewBox="0 0 24 23">
    <circle cx="12" cy="12" r="11.5" fill={SB.pale} stroke={SB.edge} strokeWidth=".7" />
    <path d="M6 5l11 7-8 7 3-8z" fill="#7cc83c" stroke="#4d9020" strokeWidth=".7" />
    <circle cx="17" cy="4" r="1.6" fill="#14325e" />
  </svg>
);

const SbDown = () => (
  <svg width="24" height="23" viewBox="0 0 24 23">
    <rect x=".5" y=".5" width="23" height="22" rx="1.5" fill={SB.blue} stroke={SB.edge} />
    <path d="M8.5 5h7v6h4L12 18l-7.500-7h4z" fill="#123b7a" />
  </svg>
);

const places = [
  { icon: <History {...IconStroke} />, label: "Recientes" },
  { icon: <Star size={16} color="#3a4046" fill="#3a4046" />, label: "Favoritos" },
  { icon: <House {...IconStroke} />, label: "Carpeta personal" },
  { icon: <DesktopPlace />, label: "Escritorio" },
  { icon: <DownloadPlace />, label: "Descargas" },
  { icon: <DocumentPlace />, label: "Documentos" },
  { icon: <ImagePlace />, label: "Imágenes" },
  { icon: <Music {...IconStroke} />, label: "Música" },
  { icon: <Film {...IconStroke} />, label: "Vídeos" },
  { icon: <Trash2 {...IconStroke} />, label: "Papelera" },
];

const quickLinks = [
  { icon: <DesktopWin />, label: "Escritorio", pin: true },
  { icon: <DownloadWin />, label: "Descargas", pin: true },
  { icon: <DocumentWin />, label: "Documentos", pin: true },
  { icon: <ImageWin />, label: "Imágenes", pin: true },
  { icon: <WinFolder />, label: "compartir" },
  { icon: <WinFolder />, label: "ejercicisB Albert Mon" },
  { icon: <WinFolder />, label: "m01 sistemas inform" },
  { icon: <WinFolder />, label: "virtualizacion ejercici" },
];

const menuItems = ["Archivo", "Máquina", "Ver", "Entrada", "Dispositivos", "Ayuda"];

function VirtualBoxPane() {
  return (
    <VBoxWindow>
      <VBoxTitle>
        <VBoxLogo />
        <TitleText>Ubuntu20 [Corriendo] - Oracle VM VirtualBox</TitleText>
        <CaptionButtons>
          <Line w={15} />
          <Square />
          <Cross />
        </CaptionButtons>
      </VBoxTitle>
      <MenuBar>
        {menuItems.map((item, i) => (
          <MenuItem key={item} $active={i === 0}>{item}</MenuItem>
        ))}
      </MenuBar>
      <TopPanel>
        <PanelActivities>Actividades</PanelActivities>
        <PanelApp>
          <FolderOutline />
          Archivos
          <Caret $ml={2} />
        </PanelApp>
        <PanelClock>16 de oct&nbsp; 11:11</PanelClock>
        <PanelTray>
          <TrayNetwork />
          <TraySpeaker />
          <TrayBattery />
          <Caret />
        </PanelTray>
      </TopPanel>
      <Desktop>
        <Dock>
          <DockSlot $h={70}><FirefoxIcon /></DockSlot>
          <DockSlot><ThunderbirdIcon /></DockSlot>
          <DockSlot>
            <RunningDot />
            <DockActive><FilesIcon /></DockActive>
          </DockSlot>
          <DockSlot><RhythmboxIcon /></DockSlot>
          <DockSlot><WriterIcon /></DockSlot>
          <DockSlot $pb={5}><StoreIcon /></DockSlot>
          <DockSlot><HelpIcon /></DockSlot>
          <DockSlot $clip $h={36}><TerminalIcon /></DockSlot>
          <DockGrid>
            {Array.from({ length: 9 }, (_, i) => <DockDot key={i} />)}
          </DockGrid>
        </Dock>
        <FilesWindow>
          <HeaderBar>
            <HeaderGroup>
              <HeaderBtn><NavChevron /></HeaderBtn>
              <HeaderBtn $w={35}><NavChevron dir="right" color="#8a8a8a" /></HeaderBtn>
            </HeaderGroup>
            <HeaderGroup>
              <PathBtn>
                <DriveIcon />
                <PathLabel>sf_compartir</PathLabel>
                <Caret />
              </PathBtn>
            </HeaderGroup>
            <HeaderSpacer />
            <HeaderGroup><HeaderBtn><Search size={17} color="#eee" strokeWidth={1.3} /></HeaderBtn></HeaderGroup>
            <HeaderGroup>
              <HeaderBtn><ListViewIcon /></HeaderBtn>
              <HeaderBtn $w={35}><Caret /></HeaderBtn>
            </HeaderGroup>
            <HeaderGroup $mr={0}><HeaderBtn><HamburgerIcon /></HeaderBtn></HeaderGroup>
            <WmButtons>
              <WmMinimize><Line w={8} color="#eee" /></WmMinimize>
              <RestoreIcon />
              <WmClose><Cross size={8} color="#fff" sw={2} /></WmClose>
            </WmButtons>
          </HeaderBar>
          <FilesBody>
            <Places>
              <PlacesList>
                {places.map((p) => (
                  <PlaceRow key={p.label}>
                    <PlaceIcon>{p.icon}</PlaceIcon>
                    <PlaceLabel>{p.label}</PlaceLabel>
                  </PlaceRow>
                ))}
                <PlaceRow $selected>
                  <PlaceIcon><DriveIcon color="#fbd9cb" /></PlaceIcon>
                  <PlaceLabel>sf_compartir</PlaceLabel>
                  <EjectCell><EjectIcon color="#fbd9cb" /></EjectCell>
                </PlaceRow>
              </PlacesList>
              <PlaceRule $mt={5} />
              <PlaceRow $h={46}>
                <PlaceIcon><Disc {...IconStroke} /></PlaceIcon>
                <PlaceLabel>VBox_GAs_6....</PlaceLabel>
                <EjectRound><EjectIcon color="#555" /></EjectRound>
              </PlaceRow>
              <PlaceRule />
              <PlaceRow $h={46}>
                <PlaceIcon><Plus {...IconStroke} /></PlaceIcon>
                <PlaceLabel>Otras ubicaciones</PlaceLabel>
              </PlaceRow>
            </Places>
            <FileGrid>
              <FileItem>
                <FileThumb><DocThumb /></FileThumb>
                desktop.ini
              </FileItem>
              <FileItem>
                <FileThumb><DiagramThumb /></FileThumb>
                ej 1 xml.<br />PNG
              </FileItem>
            </FileGrid>
          </FilesBody>
        </FilesWindow>
      </Desktop>
      <VBoxStatus>
        <StatusIcons>
          <SbDisk />
          <SbCd />
          <SbAudio />
          <SbNet />
          <SbUsb />
          <SbFolder />
          <SbDisplay />
          <SbCamera />
          <SbChip />
          <SbSeamless />
          <SbDown />
        </StatusIcons>
        <HostKey>CTRL DERECHA</HostKey>
        <GripCell><ResizeGrip /></GripCell>
      </VBoxStatus>
    </VBoxWindow>
  );
}

function ExplorerPane() {
  return (
    <Explorer>
      <QuickBar>
        <WinFolder w={14} h={21} />
        <QuickRule $ml={12} $mr={19} />
        <ChecklistDoc />
        <QuickGap $w={16} />
        <WinFolder w={14} h={21} />
        <QuickGap $w={16} />
        <QuickDrop />
        <QuickRule $ml={15} $mr={7} />
        <QuickTitle>compartir</QuickTitle>
        <QuickCaptions>
          <Line w={15} color="#888" />
          <Square color="#999" />
        </QuickCaptions>
      </QuickBar>
      <Tabs>
        <Tab $active $w={84}>Archivo</Tab>
        <Tab $w={77}>Inicio</Tab>
        <Tab $w={113}>Compartir</Tab>
        <Tab $w={74}>Vista</Tab>
        <TabsEnd><ChevronDown w={12} color="#aaa" sw={1} /></TabsEnd>
      </Tabs>
      <NavBar>
        <NavSlot $w={46}><ThinArrow /></NavSlot>
        <NavSlot $w={45}><ThinArrow dir="right" /></NavSlot>
        <NavSlot $w={26}><ChevronDown w={10} color="#dcdcdc" /></NavSlot>
        <NavSlot $w={35}><UpArrow /></NavSlot>
        <AddressBox>
          <WinFolder />
          <AddressSep><AddressChevron /></AddressSep>
          <AddressLabel>compartir</AddressLabel>
          <ChevronDown />
          <RefreshCell><RefreshIcon /></RefreshCell>
        </AddressBox>
        <SearchBox>
          <SearchGlass />
          Buscar en compartir
        </SearchBox>
      </NavBar>
      <ExplorerBody>
        <NavPane>
          <QuickRow $selected $indent={39}><SpeedStar />Acceso rápido</QuickRow>
          {quickLinks.map((q) => (
            <QuickRow key={q.label} $sub $indent={49}>
              <NavIconBox>{q.icon}</NavIconBox>
              <QuickLabel>{q.label}</QuickLabel>
              {q.pin && <PinCell><PinIcon /></PinCell>}
            </QuickRow>
          ))}
          <QuickRow $gap $indent={36}><NavIconBox $w={24}><OneDriveIcon /></NavIconBox>OneDrive</QuickRow>
          <QuickRow $gap $indent={36}><NavIconBox $w={24}><PcIcon /></NavIconBox>Este equipo</QuickRow>
          <QuickRow $gap $indent={36}><NavIconBox $w={24}><NetworkIcon /></NavIconBox>Red</QuickRow>
        </NavPane>
        <FileArea>
          <ColumnHeads>
            <SortMark><SortCaret /></SortMark>
            <ColumnName>Nombre</ColumnName>
            <ColumnDate>Fecha de modificación</ColumnDate>
          </ColumnHeads>
          <FileList>
            <FileRow>
              <ImageFileIcon />
              <FileRowName>ej 1 xml</FileRowName>
              <FileRowDate>15/10/2020 11:02</FileRowDate>
            </FileRow>
          </FileList>
          <ScrollTrack>
            <ScrollArrow><SmallLeft /></ScrollArrow>
            <ScrollThumb />
          </ScrollTrack>
        </FileArea>
      </ExplorerBody>
      <ExplorerStatus>
        <StatusCount>1 elemento</StatusCount>
        <ViewToggle><TinyList /></ViewToggle>
      </ExplorerStatus>
    </Explorer>
  );
}

export default function App() {
  return (
    <>
      <GlobalStyle />
      <Page>
        <VirtualBoxPane />
        <ExplorerPane />
      </Page>
    </>
  );
}
